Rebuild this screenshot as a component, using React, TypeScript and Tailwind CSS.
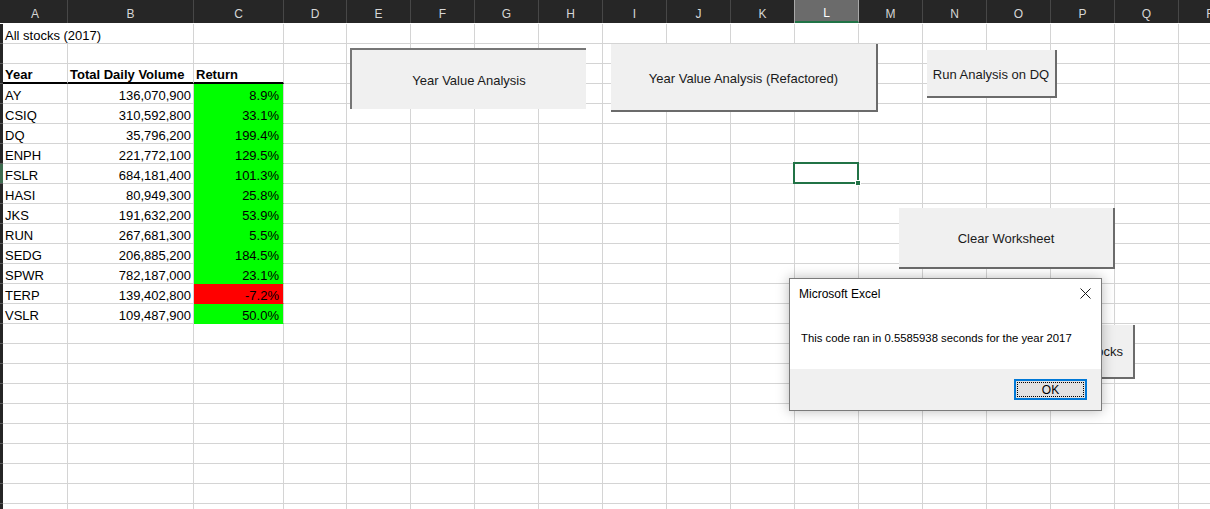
const cols = [
  { name: "A", w: "w-[65px]" },
  { name: "B", w: "w-[126px]" },
  { name: "C", w: "w-[90px]" },
  { name: "D", w: "w-[63px]" },
  { name: "E", w: "w-[64px]" },
  { name: "F", w: "w-[64px]" },
  { name: "G", w: "w-[64px]" },
  { name: "H", w: "w-[64px]" },
  { name: "I", w: "w-[64px]" },
  { name: "J", w: "w-[64px]" },
  { name: "K", w: "w-[64px]" },
  { name: "L", w: "w-[64px]" },
  { name: "M", w: "w-[64px]" },
  { name: "N", w: "w-[64px]" },
  { name: "O", w: "w-[64px]" },
  { name: "P", w: "w-[64px]" },
  { name: "Q", w: "w-[64px]" },
  { name: "R", w: "w-[64px]" },
]

const stocks = [
  ["AY", "136,070,900", "8.9%"],
  ["CSIQ", "310,592,800", "33.1%"],
  ["DQ", "35,796,200", "199.4%"],
  ["ENPH", "221,772,100", "129.5%"],
  ["FSLR", "684,181,400", "101.3%"],
  ["HASI", "80,949,300", "25.8%"],
  ["JKS", "191,632,200", "53.9%"],
  ["RUN", "267,681,300", "5.5%"],
  ["SEDG", "206,885,200", "184.5%"],
  ["SPWR", "782,187,000", "23.1%"],
  ["TERP", "139,402,800", "-7.2%"],
  ["VSLR", "109,487,900", "50.0%"],
]

const cellBase =
  "shrink-0 border-r border-r-[#d4d4d4] flex items-end whitespace-nowrap leading-[15px] px-[2px]"

const Row = ({ r }: { r: number }) => {
  const stock = r >= 4 && r <= 15 ? stocks[r - 4] : null

  return (
    <div className="flex h-[20px] shrink-0">
      <div
        className={`w-[3px] shrink-0 border-b border-b-[#5a5a5a] ${r === 8 ? "bg-[#3d6b4f]" : "bg-[#262626]"}`}
      />
      {cols.map((c, i) => {
        if (r === 1 && i === 1) return null
        let width = c.w
        let text = ""
        let extra = "border-b border-b-[#d4d4d4]"
        let align = "justify-start"

        if (r === 1 && i === 0) {
          width = "w-[191px]"
          text = "All stocks (2017)"
        }
        if (r === 3 && i < 3) {
          text = ["Year", "Total Daily Volume", "Return"][i]
          extra = "border-b-2 border-b-black font-bold"
        }
        if (stock && i < 3) {
          text = stock[i]
          if (i > 0) align = "justify-end"
          if (i === 2) {
            const red = stock[0] === "TERP"
            extra = red
              ? "border-b border-b-[#ff0000] bg-[#ff0000] pr-[4px]"
              : "border-b border-b-[#00ff00] bg-[#00ff00] pr-[4px]"
          }
        }

        return (
          <div key={c.name} className={`${cellBase} ${width} ${extra} ${align}`}>
            {text}
          </div>
        )
      })}
    </div>
  )
}

const Button = ({ label, className }: { label: string; className: string }) => (
  <div
    className={`absolute flex items-center justify-center bg-[#f0f0f0] text-[13px] text-[#1a1a1a] whitespace-nowrap ${className}`}
  >
    {label}
  </div>
)

export default function App() {
  const rows = Array.from({ length: 25 }, (_, i) => i + 1)

  return (
    <div className="relative w-[1210px] h-[509px] overflow-hidden bg-white font-['Liberation_Sans',Arial,sans-serif] text-[13px] text-black">
      <div className="flex h-[23px] bg-[#262626]">
        <div className="w-[3px] shrink-0" />
        {cols.map((c) => (
          <div
            key={c.name}
            className={`${c.w} shrink-0 h-full flex items-center justify-center pt-[4px] text-[12px] border-r ${
              c.name === "L"
                ? "bg-[#6b6b6b] text-white border-r-[#a8a8a8] border-b-2 border-b-[#217346]"
                : c.name === "K"
                  ? "text-[#d6d6d6] border-r-[#a8a8a8]"
                  : "text-[#d6d6d6] border-r-[#474747]"
            }`}
          >
            {c.name}
          </div>
        ))}
      </div>

      <div className="flex flex-col pt-[1px]">
        {rows.map((r) => (
          <Row key={r} r={r} />
        ))}
      </div>

      {/* selected cell L8 */}
      <div className="absolute left-[793px] top-[162px] w-[66px] h-[22px] border-2 border-[#217346]">
        <div className="absolute -right-[4px] -bottom-[4px] w-[6px] h-[6px] bg-[#217346] border border-white" />
      </div>

      <Button
        label="Year Value Analysis"
        className="left-[350px] top-[48px] w-[236px] h-[61px] border-t-2 border-l-2 border-[#767676] pt-[2px]"
      />
      <Button
        label="Year Value Analysis (Refactored)"
        className="left-[611px] top-[44px] w-[267px] h-[68px] border-r-2 border-b-2 border-[#6b6b6b] pt-[4px]"
      />
      <Button
        label="Run Analysis on DQ"
        className="left-[927px] top-[50px] w-[130px] h-[48px] border-r-2 border-b-2 border-[#6b6b6b] pt-[4px]"
      />
      <Button
        label="Clear Worksheet"
        className="left-[899px] top-[208px] w-[216px] h-[61px] border-r-2 border-b-2 border-[#6b6b6b] pt-[2px]"
      />
      <Button
        label="Run Analysis for All Stocks"
        className="left-[959px] top-[325px] w-[176px] h-[54px] border-r-2 border-b-2 border-[#6b6b6b] pt-[2px]"
      />

      {/* message box */}
      <div className="absolute left-[789px] top-[278px] w-[313px] h-[133px] flex flex-col bg-white border border-[#7a7a7a] shadow-[0_0_12px_rgba(0,0,0,0.28)]">
        <div className="h-[29px] flex items-center justify-between pl-[9px] pr-[9px]">
          <span className="text-[12px] text-black">Microsoft Excel</span>
          <svg width="11" height="11" viewBox="0 0 11 11" className="mr-[1px]">
            <path d="M0.5 0.5 L10.5 10.5 M10.5 0.5 L0.5 10.5" stroke="#1a1a1a" strokeWidth="1" />
          </svg>
        </div>
        <div className="flex-1 flex items-center pl-[11px] text-[11.3px] text-black">
          This code ran in 0.5585938 seconds for the year 2017
        </div>
        <div className="h-[41px] flex items-center justify-end pr-[14px] bg-[#f0f0f0]">
          <div className="w-[73px] h-[21px] border-2 border-[#0078d7] bg-[#e1e1e1] p-[1px]">
            <div className="w-full h-full flex items-center justify-center border border-dotted border-black text-[12px] leading-none">
              OK
            </div>
          </div>
        </div>
      </div>
    </div>
  )
}
